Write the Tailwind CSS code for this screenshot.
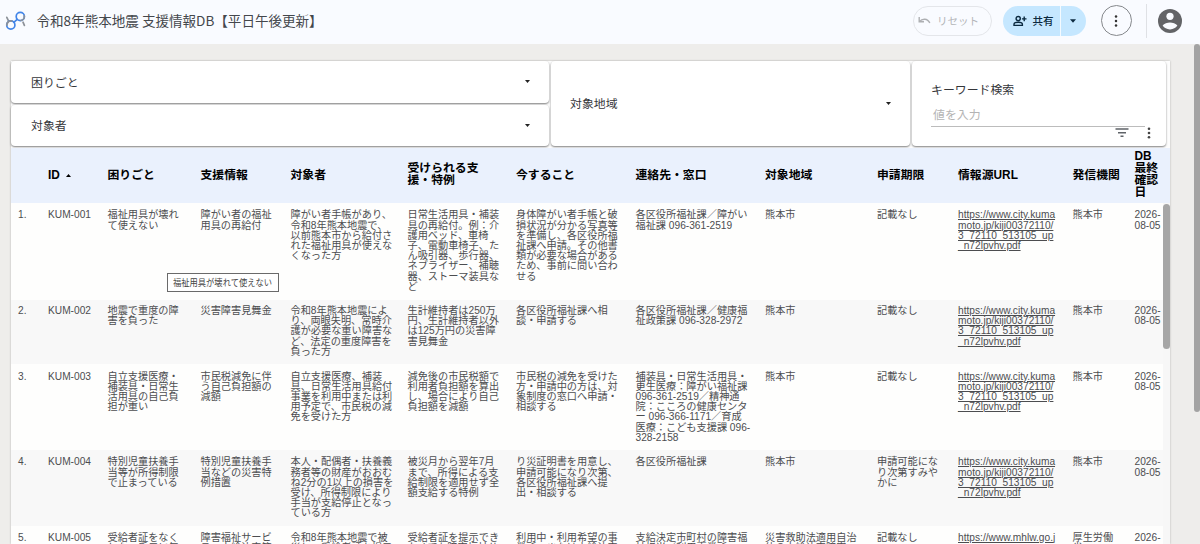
<!DOCTYPE html>
<html lang="ja">
<head>
<meta charset="utf-8">
<title>令和8年熊本地震 支援情報DB</title>
<script src="https://cdn.jsdelivr.net/npm/@tailwindcss/browser@4"></script>
</head>
<body class="w-[1200px] h-[544px] overflow-hidden bg-[#eeedeb] font-['Liberation_Sans','Noto_Sans_CJK_JP',sans-serif] flex flex-col">

<header class="h-[44px] shrink-0 bg-[#f9fbff] flex items-center font-['Noto_Sans_CJK_JP',sans-serif]">
  <svg class="ml-[5px] -mt-[3px] w-[22px] h-[22px] shrink-0" viewBox="0 0 22 22" fill="none" stroke-width="1.7" stroke-linecap="round">
    <path d="M1.8 7.3L3.6 11.1M18 12.2l1.4 3.2" stroke="#8d9299"/>
    <circle cx="5.8" cy="15" r="4.1" stroke="#4285e8"/>
    <path d="M2.2 12.9a4.1 4.1 0 0 1 4.6-1.9M1.8 15.2a4.1 4.1 0 0 1 1.4-3.2" stroke="#8d9299"/>
    <circle cx="15.3" cy="6.5" r="4.1" stroke="#4285e8"/>
    <path d="M19.3 5.9a4.1 4.1 0 0 1-3.3 4.6" stroke="#8d9299"/>
    <path d="M8.8 12.3L12.2 9.3" stroke="#4285e8"/>
  </svg>
  <h1 class="ml-[9.5px] -mt-[4px] text-[13.55px] leading-5 text-[#44474c] whitespace-nowrap">令和8年熊本地震 支援情報DB【平日午後更新】</h1>
  <div class="ml-auto -mt-[3px] flex items-center">
    <button class="w-[79px] h-[30px] rounded-full border border-[#e4e6ea] flex items-center text-[10.5px] text-[#b3b5b8]">
      <svg class="ml-[4px] w-[13px] h-[10px]" viewBox="0 0 13 10" fill="none" stroke="#adafb2" stroke-width="1.4"><path d="M1.2 1v4.8H6M1.4 5.6C4 2.6 9.5 2 11.8 7"/></svg>
      <span class="ml-[6.5px]">リセット</span>
    </button>
    <div class="ml-[11px] w-[83px] h-[30px] rounded-full bg-[#c5e7ff] flex items-center text-[10.5px] font-medium text-[#0b2a40]">
      <svg class="ml-[10px] w-[14px] h-[12px]" viewBox="0 0 14 12" fill="none" stroke="#0b2a40" stroke-width="1.4"><circle cx="5.2" cy="3.6" r="2.1"/><path d="M1 10.4V9.4C1 7.8 3.4 7.3 5.2 7.3s4.2.5 4.2 2.1v1zM11.2 1.6v4.6M8.9 3.9h4.6"/></svg>
      <span class="ml-[6px] w-[21px]">共有</span>
      <span class="ml-[6.5px] w-px h-full bg-[#f4faff]"></span>
      <svg class="ml-[9px] w-[6px] h-[4px]" viewBox="0 0 6 4"><path d="M0 .3h6L3 3.7z" fill="#0b2a40"/></svg>
    </div>
    <button class="ml-[15px] w-[31px] h-[31px] rounded-full border border-[#85888c] flex items-center justify-center">
      <svg class="w-[4px] h-[12px]" viewBox="0 0 4 12" fill="#333"><circle cx="2" cy="1.6" r="1.25"/><circle cx="2" cy="6" r="1.25"/><circle cx="2" cy="10.4" r="1.25"/></svg>
    </button>
    <span class="ml-[14.5px] w-px h-[34px] bg-[#dfe1e5]"></span>
    <svg class="ml-[11px] mr-[18px] w-[24px] h-[24px]" viewBox="0 0 24 24"><circle cx="12" cy="12" r="12" fill="#636467"/><circle cx="12" cy="7.3" r="3.6" fill="#f9fbff"/><path d="M4.6 16.6C6 14.4 9.6 13.5 12 13.5s6 .9 7.4 3.1A8.8 8.8 0 0 1 12 20.4a8.8 8.8 0 0 1-7.4-3.8z" fill="#f9fbff"/></svg>
  </div>
</header>

<div class="flex flex-1 min-h-0 justify-between">
<main class="relative ml-[11px] mt-[17px] w-[1159px] h-[483px] shrink-0 bg-[#fdfdfd] shadow-[0_0_2px_rgba(0,0,0,0.25)] flex flex-col">

  <section class="h-[87px] shrink-0 w-[1155px] flex gap-[2px] pb-[2px] text-[11.9px] text-[#35363a] font-['Noto_Sans_CJK_JP',sans-serif]">
    <div class="w-[538px] flex flex-col gap-[2px]">
      <div class="h-[41.5px] bg-white rounded-sm shadow-[0_1px_2px_rgba(0,0,0,0.5)] flex items-center justify-between pl-[20px] pr-[19px]"><span>困りごと</span><svg class="w-[5px] h-[3px]" viewBox="0 0 5 3"><path d="M0 0h5L2.5 3z" fill="#222"/></svg></div>
      <div class="h-[41.5px] bg-white rounded-sm shadow-[0_1px_2px_rgba(0,0,0,0.5)] flex items-center justify-between pl-[20px] pr-[19px]"><span>対象者</span><svg class="w-[5px] h-[3px]" viewBox="0 0 5 3"><path d="M0 0h5L2.5 3z" fill="#222"/></svg></div>
    </div>
    <div class="w-[359px] bg-white rounded-sm shadow-[0_1px_2px_rgba(0,0,0,0.5)] flex items-center justify-between pl-[19px] pr-[19px]"><span class="-mt-[1px]">対象地域</span><svg class="w-[5px] h-[3px]" viewBox="0 0 5 3"><path d="M0 0h5L2.5 3z" fill="#222"/></svg></div>
    <div class="flex-1 bg-white rounded-sm shadow-[0_1px_2px_rgba(0,0,0,0.5)] pl-[19px] pt-[19px] flex flex-col">
      <span class="leading-[18px]">キーワード検索</span>
      <div class="mt-[6px] w-[214px] h-[23px] border-b border-[#bcbcbc] pl-[2px] leading-[20px] text-[#b4b4b4]">値を入力</div>
      <div class="flex items-start pl-[184px]">
        <svg class="mt-[1px] w-[14px] h-[9px]" viewBox="0 0 14 9" stroke="#5f6368" stroke-width="1.4"><path d="M.5 1h13M3 4.7h8M5.5 8.3h3"/></svg>
        <svg class="ml-[18px] w-[4px] h-[12px]" viewBox="0 0 4 12" fill="#444"><circle cx="2" cy="1.8" r="1.3"/><circle cx="2" cy="6" r="1.3"/><circle cx="2" cy="10.2" r="1.3"/></svg>
      </div>
    </div>
  </section>

  <div class="h-[55px] shrink-0 bg-[#eaf1fd] pl-[7px] grid grid-cols-[30px_59.5px_93px_90px_117px_108.5px_119.5px_129.5px_112px_81px_114.5px_62px_35px] items-center text-[11.85px] leading-[11.85px] font-bold text-black whitespace-nowrap">
    <div></div>
    <div class="flex items-center">ID<svg class="ml-[6px] w-[5px] h-[3px]" viewBox="0 0 5 3"><path d="M0 3h5L2.5 0z"/></svg></div>
    <div>困りごと</div><div>支援情報</div><div>対象者</div><div class="pb-[1px]">受けられる支<br>援・特例</div><div>今すること</div><div>連絡先・窓口</div><div>対象地域</div><div>申請期限</div><div>情報源URL</div><div>発信機関</div><div class="pb-[1px]">DB<br>最終<br>確認<br>日</div>
  </div>

  <div class="flex flex-1 min-h-0 overflow-hidden">
  <div class="w-[1152px] shrink-0 text-[10.18px] leading-[10.2px] text-[#4c4d50] whitespace-nowrap">
    <div class="h-[97px] pt-[7.4px] pl-[7px] bg-[#fefefd] grid grid-cols-[30px_59.5px_93px_90px_117px_108.5px_119.5px_129.5px_112px_81px_114.5px_62px_30px]">
      <div>1.</div><div>KUM-001</div><div>福祉用具が壊れ<br>て使えない</div><div>障がい者の福祉<br>用具の再給付</div><div>障がい者手帳があり、<br>令和8年熊本地震で、<br>以前熊本市から給付さ<br>れた福祉用具が使えな<br>くなった方</div><div>日常生活用具・補装<br>具の再給付。例：介<br>護用ベッド、車椅<br>子、電動車椅子、た<br>ん吸引器、歩行器、<br>ネブライザー、補聴<br>器、ストーマ装具な<br>ど</div><div>身体障がい者手帳と破<br>損状況が分かる写真等<br>を準備し、各区役所福<br>祉課へ申請。その他書<br>類が必要な場合がある<br>ため、事前に問い合わ<br>せる</div><div>各区役所福祉課／障がい<br>福祉課 096-361-2519</div><div>熊本市</div><div>記載なし</div><div class="underline">https://www.city.kuma<br>moto.jp/kiji00372110/<br>3_72110_513105_up<br>_n72lpvhv.pdf</div><div>熊本市</div><div>2026-<br>08-05</div>
    </div>
    <div class="h-[64px] pt-[5.9px] pl-[7px] bg-[#f8f8f8] grid grid-cols-[30px_59.5px_93px_90px_117px_108.5px_119.5px_129.5px_112px_81px_114.5px_62px_30px]">
      <div>2.</div><div>KUM-002</div><div>地震で重度の障<br>害を負った</div><div>災害障害見舞金</div><div>令和8年熊本地震によ<br>り、両眼失明、常時介<br>護が必要な重い障害な<br>ど、法定の重度障害を<br>負った方</div><div>生計維持者は250万<br>円、生計維持者以外<br>は125万円の災害障<br>害見舞金</div><div>各区役所福祉課へ相<br>談・申請する</div><div>各区役所福祉課／健康福<br>祉政策課 096-328-2972</div><div>熊本市</div><div>記載なし</div><div class="underline">https://www.city.kuma<br>moto.jp/kiji00372110/<br>3_72110_513105_up<br>_n72lpvhv.pdf</div><div>熊本市</div><div>2026-<br>08-05</div>
    </div>
    <div class="h-[86px] pt-[7.6px] pl-[7px] bg-[#fefefd] grid grid-cols-[30px_59.5px_93px_90px_117px_108.5px_119.5px_129.5px_112px_81px_114.5px_62px_30px]">
      <div>3.</div><div>KUM-003</div><div>自立支援医療・<br>補装具・日常生<br>活用具の自己負<br>担が重い</div><div>市民税減免に伴<br>う自己負担額の<br>減額</div><div>自立支援医療、補装<br>具、日常生活用具給付<br>事業を利用中または利<br>用予定で、市民税の減<br>免を受けた方</div><div>減免後の市民税額で<br>利用者負担額を算出<br>し、場合により自己<br>負担額を減額</div><div>市民税の減免を受けた<br>方・申請中の方は、対<br>象制度の窓口へ申請・<br>相談する</div><div>補装具・日常生活用具・<br>更生医療：障がい福祉課<br>096-361-2519／精神通<br>院：こころの健康センタ<br>ー 096-366-1171／育成<br>医療：こども支援課 096-<br>328-2158</div><div>熊本市</div><div>記載なし</div><div class="underline">https://www.city.kuma<br>moto.jp/kiji00372110/<br>3_72110_513105_up<br>_n72lpvhv.pdf</div><div>熊本市</div><div>2026-<br>08-05</div>
    </div>
    <div class="h-[75.5px] pt-[7.4px] pl-[7px] bg-[#f8f8f8] grid grid-cols-[30px_59.5px_93px_90px_117px_108.5px_119.5px_129.5px_112px_81px_114.5px_62px_30px]">
      <div>4.</div><div>KUM-004</div><div>特別児童扶養手<br>当等が所得制限<br>で止まっている</div><div>特別児童扶養手<br>当などの災害特<br>例措置</div><div>本人・配偶者・扶養義<br>務者等の財産がおおむ<br>ね2分の1以上の損害を<br>受け、所得制限により<br>手当が支給停止となっ<br>ている方</div><div>被災月から翌年7月<br>まで、所得による支<br>給制限を適用せず全<br>額支給する特例</div><div>り災証明書を用意し、<br>申請可能になり次第、<br>各区役所福祉課へ提<br>出・相談する</div><div>各区役所福祉課</div><div>熊本市</div><div>申請可能にな<br>り次第すみや<br>かに</div><div class="underline">https://www.city.kuma<br>moto.jp/kiji00372110/<br>3_72110_513105_up<br>_n72lpvhv.pdf</div><div>熊本市</div><div>2026-<br>08-05</div>
    </div>
    <div class="h-[60px] pt-[7px] pl-[7px] bg-[#fefefd] grid grid-cols-[30px_59.5px_93px_90px_117px_108.5px_119.5px_129.5px_112px_81px_114.5px_62px_30px]">
      <div>5.</div><div>KUM-005</div><div>受給者証をなく<br>した・手元に無</div><div>障害福祉サービ<br>ス・支給決定等</div><div>令和8年熊本地震で被<br>災し、受給者証を提示</div><div>受給者証を提示でき<br>なくても障害福祉サ</div><div>利用中・利用希望の事<br>業所、または支給決定</div><div>支給決定市町村の障害福<br>祉担当／利用事業所</div><div>災害救助法適用自治<br>体の支給決定障害</div><div>記載なし</div><div class="underline">https://www.mhlw.go.j</div><div>厚生労働<br>省</div><div>2026-</div>
    </div>
  </div>
  <div class="w-[7px] shrink-0 bg-[#f7f7f7]"><div class="mt-[1px] h-[145px] w-[7px] rounded-full bg-[#a6a6a6]"></div></div>
  </div>

  <div class="absolute left-[156px] top-[212px] w-[112px] h-[19px] border border-[#6a6a6a] bg-white pl-[5px] leading-[17px] text-[9.3px] text-[#444] whitespace-nowrap font-['Noto_Sans_CJK_JP',sans-serif]"><span class="inline-block origin-left scale-x-[0.89]">福祉用具が壊れて使えない</span></div>
</main>
<div class="w-[6px] shrink-0"><div class="h-[368px] w-[6px] rounded-full bg-[#a3a3a3]"></div></div>
</div>
</body>
</html>
